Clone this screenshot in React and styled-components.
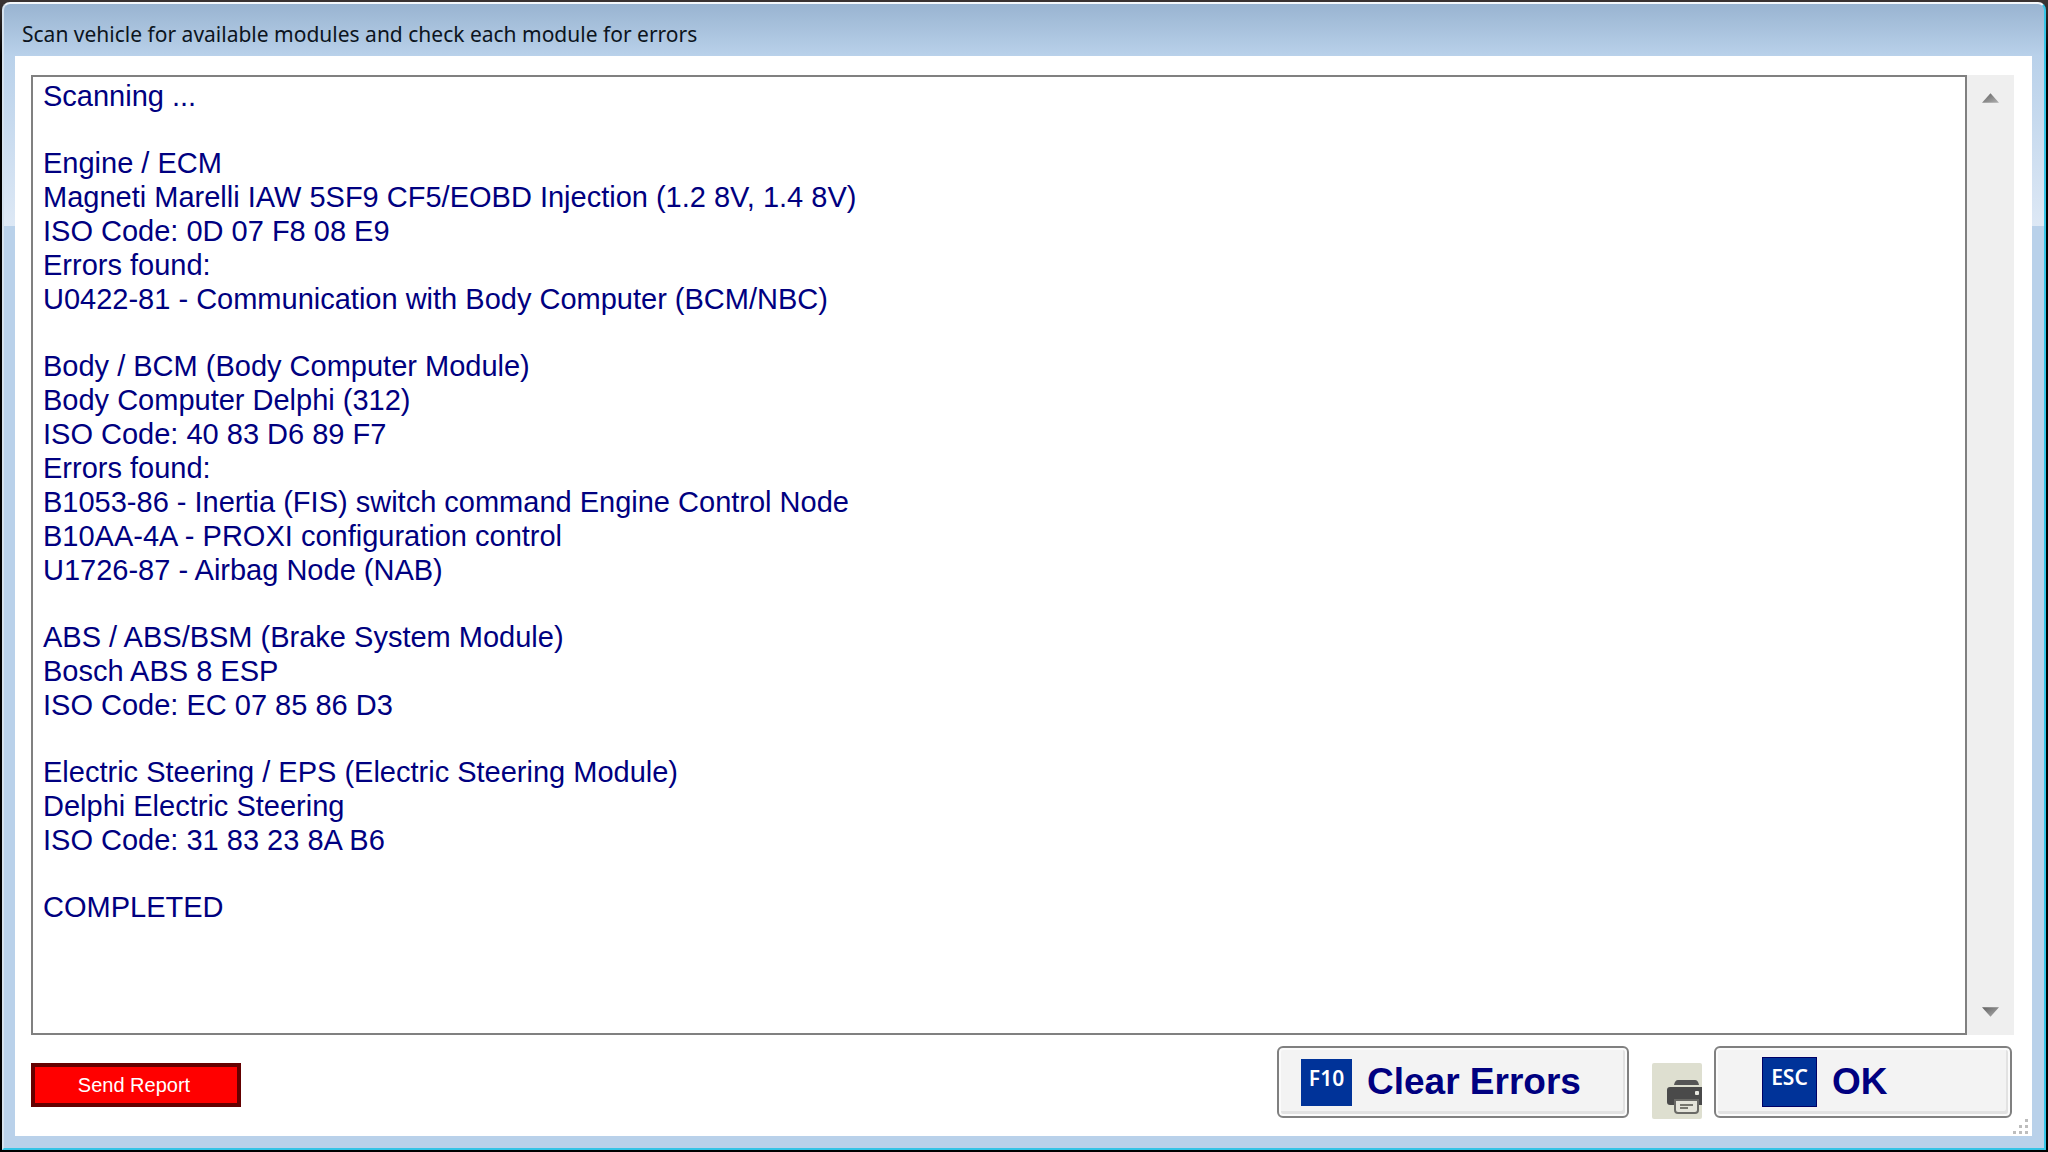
import React from 'react';
import styled, { createGlobalStyle } from 'styled-components';

const GlobalStyle = createGlobalStyle`
  * { box-sizing: border-box; }
  body { margin: 0; background: #000; }
`;

const sans = `'Liberation Sans', Arial, sans-serif`;
const ui = `'Noto Sans', 'Segoe UI', sans-serif`;

const Desktop = styled.div`
  display: flex;
  min-height: 100vh;
  padding: 2px;
  background: linear-gradient(#3a3332 0, #3a3332 2px, #000 56px);
`;

const Window = styled.main`
  flex: 1;
  display: flex;
  flex-direction: column;
  border: 2px solid;
  border-color: #f4f8fc #35c4e6 #35c4e6 #d5e2ee;
  border-radius: 8px 8px 0 0;
  background:
    linear-gradient(#99b4d1, #b9d1ea) 0 0 / 100% 52px no-repeat,
    linear-gradient(#b9d1ea 52px, #dde8f5 222px, #b9d1ea 222px);
  padding: 0 12px 12px 11px;
`;

const TitleBar = styled.header`
  height: 52px;
  display: flex;
  align-items: center;
  padding: 8px 7px 0;
`;

const Title = styled.h1`
  margin: 0;
  font: 400 21px/30px ${ui};
  color: #0c1420;
`;

const Client = styled.div`
  flex: 1;
  display: flex;
  flex-direction: column;
  background: #fff;
  padding: 19px 18px 17px 16px;
  position: relative;
`;

const LogArea = styled.div`
  flex: 1;
  display: flex;
`;

const Log = styled.section`
  flex: 1;
  display: flex;
  flex-direction: column;
  gap: 33px;
  border: 2px solid #808080;
  padding: 2px 10px;
  font: 400 29px/34px ${sans};
  color: #000080;
`;

const Entry = styled.p`
  margin: 0;
  white-space: pre-line;
`;

const ScrollBar = styled.div`
  width: 47px;
  background: #efefef;
  display: flex;
  flex-direction: column;
  justify-content: space-between;
`;

const ScrollButton = styled.button`
  height: 46px;
  border: 0;
  padding: 0;
  background: transparent;
  display: flex;
  align-items: center;
  justify-content: center;
`;

const Footer = styled.footer`
  display: flex;
  align-items: flex-start;
  padding: 11px 2px 0 0;
`;

const Spacer = styled.div`
  flex: 1;
`;

const ReportButton = styled.button`
  width: 210px;
  height: 44px;
  margin-top: 17px;
  padding: 0 4px 0 0;
  border: 4px solid #640000;
  background: #f00;
  color: #fff;
  font: 400 20px/24px ${sans};
`;

const CommandButton = styled.button`
  width: ${(p) => p.$width}px;
  height: 72px;
  display: flex;
  align-items: center;
  gap: 15px;
  padding: 0 0 0 ${(p) => p.$inset}px;
  border: 2px solid #808080;
  border-radius: 6px;
  background: #f3f3f3;
  box-shadow: inset 0 0 0 2px #fbfbfb, inset -2px -3px 0 2px #e2e2e2;
  color: #000080;
  font: 700 37px/42px ${sans};
`;

const KeyCap = styled.span`
  width: ${(p) => p.$width}px;
  height: ${(p) => p.$height}px;
  display: flex;
  justify-content: center;
  padding-top: 4px;
  background: #003399;
  border: ${(p) => (p.$outlined ? '1px solid #000066' : '0')};
  color: #fff;
  font: 600 21px/30px ${ui};
`;

const PrintButton = styled.button`
  width: 50px;
  height: 56px;
  margin: 17px 12px 0 23px;
  padding: 0;
  border: 0;
  border-radius: 2px;
  background: #dedfd0;
  display: flex;
`;

const Grip = styled.svg`
  position: absolute;
  right: 3px;
  bottom: 2px;
`;

const entries = [
  'Scanning ...',
  `Engine / ECM
Magneti Marelli IAW 5SF9 CF5/EOBD Injection (1.2 8V, 1.4 8V)
ISO Code: 0D 07 F8 08 E9
Errors found:
U0422-81 - Communication with Body Computer (BCM/NBC)`,
  `Body / BCM (Body Computer Module)
Body Computer Delphi (312)
ISO Code: 40 83 D6 89 F7
Errors found:
B1053-86 - Inertia (FIS) switch command Engine Control Node
B10AA-4A - PROXI configuration control
U1726-87 - Airbag Node (NAB)`,
  `ABS / ABS/BSM (Brake System Module)
Bosch ABS 8 ESP
ISO Code: EC 07 85 86 D3`,
  `Electric Steering / EPS (Electric Steering Module)
Delphi Electric Steering
ISO Code: 31 83 23 8A B6`,
  'COMPLETED',
];

function Arrow({ down }) {
  return (
    <svg width="17" height="10" viewBox="0 0 18 10" aria-hidden="true">
      <defs>
        <linearGradient id={down ? 'dn' : 'up'} x1="0" y1="0" x2="1" y2="1">
          <stop offset="0" stopColor="#606060" />
          <stop offset="1" stopColor="#b0b0b0" />
        </linearGradient>
      </defs>
      <path d={down ? 'M0 0H18L9 10Z' : 'M0 10H18L9 0Z'} fill={`url(#${down ? 'dn' : 'up'})`} />
    </svg>
  );
}

function PrinterIcon() {
  return (
    <svg width="50" height="56" viewBox="0 0 50 56" aria-hidden="true">
      <path d="M26 17h17q3 0 4 5H22q1-5 4-5z" fill="#555" />
      <path d="M18 24h32v18H18q-3 0-3-3V27q0-3 3-3z" fill="#4a4a4a" />
      <rect x="43" y="28" width="4" height="4" rx="1" fill="#e8e8e0" />
      <path d="M23 37h23v10q0 3-3 3H26q-3 0-3-3z" fill="#e4e4da" stroke="#6a6a66" strokeWidth="2" />
      <path d="M28 42h13M28 45h8" stroke="#77776f" strokeWidth="2" />
    </svg>
  );
}

export default function App() {
  return (
    <>
      <GlobalStyle />
      <Desktop>
        <Window>
          <TitleBar>
            <Title>Scan vehicle for available modules and check each module for errors</Title>
          </TitleBar>
          <Client>
            <LogArea>
              <Log role="log" aria-label="Scan results">
                {entries.map((text) => (
                  <Entry key={text}>{text}</Entry>
                ))}
              </Log>
              <ScrollBar>
                <ScrollButton type="button" aria-label="Scroll up"><Arrow /></ScrollButton>
                <ScrollButton type="button" aria-label="Scroll down"><Arrow down /></ScrollButton>
              </ScrollBar>
            </LogArea>
            <Footer>
              <ReportButton type="button">Send Report</ReportButton>
              <Spacer />
              <CommandButton type="button" $width={352} $inset={22}>
                <KeyCap $width={51} $height={47}>F10</KeyCap>
                Clear Errors
              </CommandButton>
              <PrintButton type="button" aria-label="Print"><PrinterIcon /></PrintButton>
              <CommandButton type="button" $width={298} $inset={46}>
                <KeyCap $width={55} $height={50} $outlined>ESC</KeyCap>
                OK
              </CommandButton>
            </Footer>
            <Grip width="16" height="16" viewBox="0 0 16 16" aria-hidden="true">
              <path
                d="M12 1h3v3h-3zM6 7h3v3H6zM12 7h3v3h-3zM0 13h3v3H0zM6 13h3v3H6zM12 13h3v3h-3z"
                fill="#bdbdbd"
              />
            </Grip>
          </Client>
        </Window>
      </Desktop>
    </>
  );
}
